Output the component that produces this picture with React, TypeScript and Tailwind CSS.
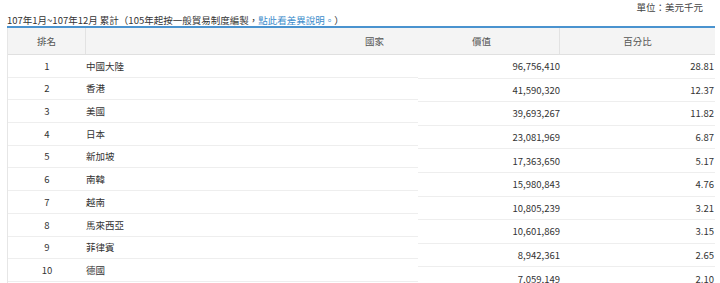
import React from "react";

const left: [string, string][] = [
  ["1", "中國大陸"],
  ["2", "香港"],
  ["3", "美國"],
  ["4", "日本"],
  ["5", "新加坡"],
  ["6", "南韓"],
  ["7", "越南"],
  ["8", "馬來西亞"],
  ["9", "菲律賓"],
  ["10", "德國"],
];

const right: [string, string][] = [
  ["96,756,410", "28.81"],
  ["41,590,320", "12.37"],
  ["39,693,267", "11.82"],
  ["23,081,969", "6.87"],
  ["17,363,650", "5.17"],
  ["15,980,843", "4.76"],
  ["10,805,239", "3.21"],
  ["10,601,869", "3.15"],
  ["8,942,361", "2.65"],
  ["7,059,149", "2.10"],
];

export default function App() {
  return (
    <div className="w-[720px] h-[283px] overflow-hidden bg-white text-[#333] font-['Noto_Sans_CJK_TC','Noto_Sans',sans-serif] text-[9.5px]">
      <div className="h-[16px] flex items-center justify-end pr-[17px] leading-none text-[#444]">
        單位：美元千元
      </div>
      <div className="h-[10px] pl-[7px] leading-[9px] whitespace-nowrap text-[#333]">
        107年1月~107年12月 累計（105年起按一般貿易制度編製，
        <span className="text-[#3b8ccb]">點此看差異說明。</span>）
      </div>
      <div className="ml-[7px] w-[708px] flex border-t-2 border-[#4a93cf]">
        <div className="w-[411px] border-l border-[#e6e6e6]">
          <div className="flex h-[27px] bg-[#f4f4f4] border-b border-[#e0e0e0] text-[#555]">
            <div className="w-[78px] border-r border-[#e2e2e2] flex items-center justify-center">
              排名
            </div>
            <div className="flex-1 flex items-center pl-[279px]">國家</div>
          </div>
          {left.map(([r, c]) => (
            <div
              key={r}
              className="flex h-[22.7px] border-b border-[#eeeeee] items-center"
            >
              <div className="w-[78px] text-center">{r}</div>
              <div className="flex-1">{c}</div>
            </div>
          ))}
        </div>
        <div className="w-[297px]">
          <div className="flex h-[27px] bg-[#f4f4f4] border-b border-[#e0e0e0] text-[#555]">
            <div className="w-[142px] border-r border-[#e2e2e2] flex items-center justify-center pr-[14px]">
              價值
            </div>
            <div className="flex-1 flex items-center justify-center">百分比</div>
          </div>
          {right.map(([v, p]) => (
            <div
              key={v}
              className="flex h-[23.6px] border-b border-[#eeeeee] items-center"
            >
              <div className="w-[142px] text-right">{v}</div>
              <div className="flex-1 text-right pr-[1px]">{p}</div>
            </div>
          ))}
        </div>
      </div>
    </div>
  );
}
